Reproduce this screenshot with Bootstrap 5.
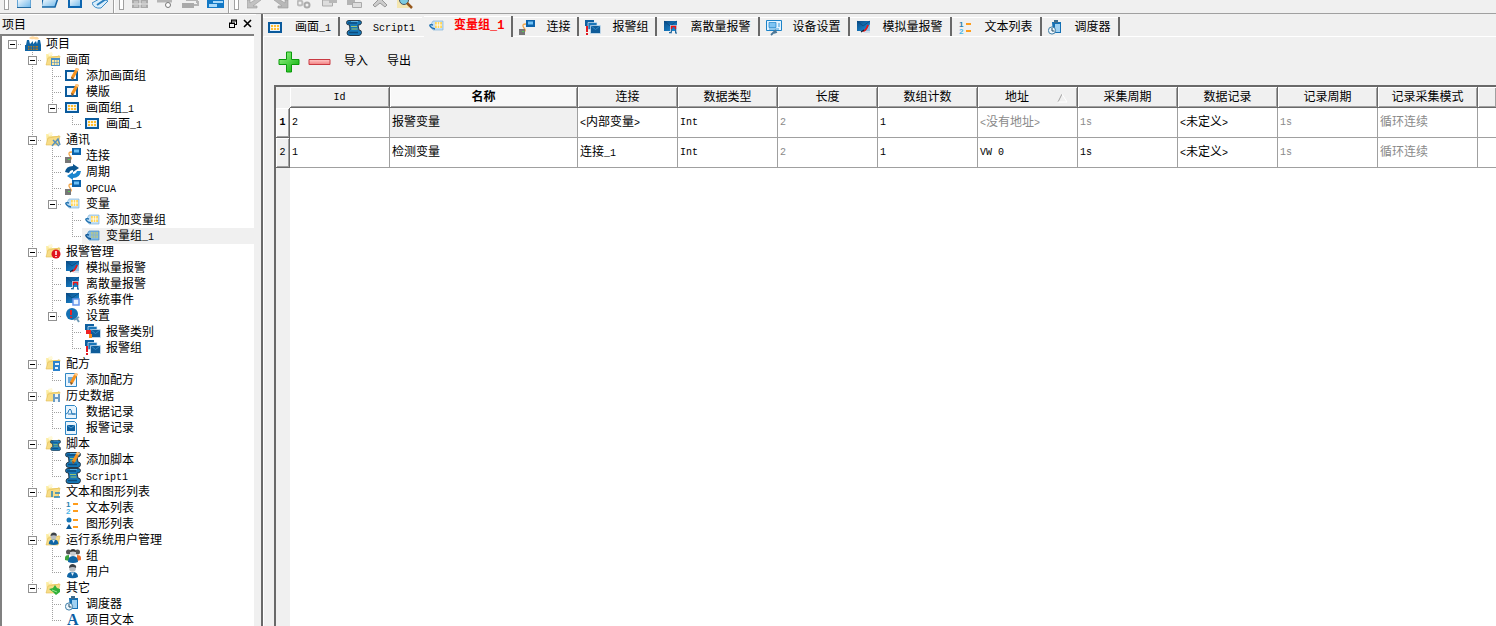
<!DOCTYPE html>
<html lang="zh-CN">
<head>
<meta charset="utf-8">
<meta name="viewport" content="width=device-width, initial-scale=1">
<title>项目 - 变量组_1</title>
<link href="https://cdn.jsdelivr.net/npm/bootstrap@5.3.0/dist/css/bootstrap.min.css" rel="stylesheet">
<style>
body{background:#f0f0f0;color:#000;font:12px/16px "Liberation Mono","Noto Sans CJK SC",monospace}
button{font:inherit;color:inherit}
svg{flex:none;display:block}
.lat{font-size:10px}
span.lat{line-height:1}
/* toolbar */
.toolbar{height:14px;border-bottom:1px solid #a0a0a0}
.tools{gap:8px}
.grip{width:5px;height:10px;border:solid #a0a0a0;border-width:0 1px 1px;background:#fff}
.split{width:2px;height:13px;background:#a0a0a0;border-right:1px solid #fff;margin:0 4px 0 -4px}
.tool{width:17px;height:10px}
/* project panel */
.side{width:256px;border-top:1px solid #fff}
.side-title{height:19px;padding:2px 3px 0 2px}
.tree-box{border:solid #808080;border-width:2px 0 0 2px;background:#fff;margin-right:2px}
.tree,.tree ul{list-style:none;margin:0;padding:0}
.tree{margin-left:-2px}
.tree ul{padding-left:20px}
.tree ul>li:not(:last-child){background:linear-gradient(#a0a0a0 50%,transparent 50%) 12px 0/1px 2px repeat-y}
.node{height:16px;padding-left:8px;background:repeating-linear-gradient(90deg,#a0a0a0 0 1px,transparent 1px 2px) 12px 8px/10px 1px no-repeat}
.tree ul>li:last-child>.node{background:repeating-linear-gradient(90deg,#a0a0a0 0 1px,transparent 1px 2px) 12px 8px/10px 1px no-repeat,repeating-linear-gradient(#a0a0a0 0 1px,transparent 1px 2px) 12px 0/1px 8px no-repeat}
.twist{width:9px;height:9px;padding:0;margin-right:5px;border:1px solid #919191;background:linear-gradient(#000,#000) center/5px 1px no-repeat #fff}
.node>.leaf{margin-left:14px}
.cap{padding-left:3px;gap:5px;height:16px}
.cap.on{background:#f0f0f0}
.cap>span{padding-top:2px}
/* editor */
.editor{border-left:2px solid #696969;margin-left:5px;box-shadow:inset 1px 0 #fff}
.tabs{height:23px;padding-top:3px;box-shadow:inset 0 -1px #fff}
.tabs button{border:0;border-right:2px solid #696969;background:#f0f0f0;padding:2px 7px 0 6px;gap:11px;height:19px;box-shadow:inset 0 1px #fff}
.tabs button.flat{border-color:#f0f0f0}
.tabs button.active{padding:0 7px 1px 5px;gap:9px;margin-top:-1px;height:21px;color:#f00;font-weight:700}
.tabs button:first-child{padding-left:5px;gap:11px}
.acts{padding:1px 15px 0;height:48px}
.acts button{border:0;background:none;padding:0}
.acts .word{margin-left:13px}
.acts .word+.word{margin-left:19px}
.grid-box{margin-left:11px;border:solid #696969;border-width:2px 0 0 2px;background:linear-gradient(90deg,#f0f0f0 14px,#fff 14px)}
.data-grid{table-layout:fixed;width:100%;border-collapse:separate;border-spacing:0}
.data-grid th,.data-grid td{overflow:hidden;white-space:nowrap;padding:1px 0 0}
.data-grid th{font-weight:400;text-align:center;background:#f0f0f0;border:solid #696969;border-width:0 1px 1px 0;box-shadow:inset 1px 1px #fff,inset -1px -1px #a0a0a0}
.data-grid thead th{height:21px}
.data-grid thead th:first-child{border-color:#f0f0f0;box-shadow:none;border-right:0}
.data-grid tr>:last-child{border-right:0}
.data-grid tbody tr{height:30px}
.data-grid td{border:solid #a0a0a0;border-width:0 1px 1px 0;padding-left:2px}
.data-grid th.cur{font-weight:700;background:#f8f8f8}
.data-grid td.cur{background:#f0f0f0}
.data-grid td.dim{color:#8a8a8a}
.w-row{width:14px}.w-col{width:100px}.w-name{width:188px}
</style>
</head>
<body class="vh-100 overflow-hidden d-flex flex-column">
<svg width="0" height="0" class="position-absolute" aria-hidden="true">
<defs>
<linearGradient id="gb" x2="1" y2="1"><stop offset="0" stop-color="#0a4c86"/><stop offset="1" stop-color="#1b8fdc"/></linearGradient>
<linearGradient id="gf" x2="1" y2="1"><stop offset="0" stop-color="#fff3b0"/><stop offset="1" stop-color="#e9bf4a"/></linearGradient>
<linearGradient id="gs" x2="1" y2="1"><stop offset="0" stop-color="#fff"/><stop offset="1" stop-color="#6cb6ea"/></linearGradient>
<linearGradient id="gg" x2="1" y2="1"><stop offset="0" stop-color="#9df58c"/><stop offset="1" stop-color="#05b005"/></linearGradient>
<linearGradient id="gr" x2="0" y2="1"><stop offset="0" stop-color="#ffc9c9"/><stop offset="1" stop-color="#f27f7f"/></linearGradient>
<symbol id="pen" viewBox="0 0 16 16"><path d="M12 1l3 1-5 9-2 2-1-3z" fill="#f7931e"/><path d="M12 1l3 1-1 2-3-1z" fill="#ffc987"/><path d="M7 10l3 1-2 2z" fill="#7a5430"/></symbol>
<symbol id="fold" viewBox="0 0 16 16"><path d="M1 2h5l1 2h6l1-1v9H2z" fill="url(#gf)"/><path d="M3 1l4-1 1 3-4 1z" fill="#fff9d8"/><path d="M1 13l2-7 12-2-2 9z" fill="#f7dc86" stroke="#e3bd55" stroke-width=".6"/></symbol>
<symbol id="factory" viewBox="0 0 16 16"><path d="M0 15V9h1l1-5h2l1 4 3-3v3l3-3 1 3 1-4h2l1 5v6H0z" fill="#0f64a4"/><path d="M3 10h10v4H3z" fill="#a87628"/><path d="M5 10v4M7.500 10v4M10 10v4M3 12h10" stroke="#0f64a4"/><path d="M4 2q3-3 6-1 3-1 4 2-3 1-5 0-3 1-5-1z" fill="#ffd9a0"/></symbol>
<symbol id="screen" viewBox="0 0 16 16"><path d="M0 2h14v11H0z" fill="#0a5a9c"/><path d="M2 4h10v7H2z" fill="#dff0ff"/><path d="M3 5h8v5H3z" fill="#ffbe32"/><path d="M5.500 5v5M8.500 5v5M3 7.500h8" stroke="#fff" stroke-width=".8"/></symbol>
<symbol id="frame" viewBox="0 0 16 16"><path d="M0 2h13v11H0z" fill="#0a5a9c"/><path d="M2 4h9v7H2z" fill="#f2f9ff"/><use href="#pen" x="-1" y="-1"/></symbol>
<symbol id="link" viewBox="0 0 16 16"><path d="M7 0h9v7H7z" fill="#0b62aa"/><path d="M9 1.500h5v3H9z" fill="#6ec1f7"/><path d="M7 4Q2 4 5 8q3 3-1 4" fill="none" stroke="#f3a64a" stroke-width="1.300"/><path d="M0 9h6v6H0z" fill="#777"/><path d="M3 11h2v1H3z" fill="#5c5"/></symbol>
<symbol id="cycle" viewBox="0 0 16 16"><path d="M0 8Q1 2 8 2V0l6 4-6 4V6Q5 6 4 9z" fill="#0a5590"/><path d="M16 7q-1 7-8 7v2l-6-4 6-4v2q3 0 4-3z" fill="#1a86cf"/></symbol>
<symbol id="tag" viewBox="0 0 16 16"><path d="M4 3h10v9H4L1 8z" fill="#c3e0f6" stroke="#84b5da" stroke-width=".7"/><path d="M6 4h7v6H6z" fill="#ffd65a"/><path d="M8.300 4v6M10.700 4v6M6 7h7" stroke="#fff" stroke-width=".8"/><path d="M4 7Q0 6 1 8q1 2 5 3" fill="none" stroke="#1d6fae" stroke-width="1.300"/></symbol>
<symbol id="tagon" viewBox="0 0 16 16"><path d="M4 3h10v9H4L1 8z" fill="#82b9e4" stroke="#3f8ac3" stroke-width=".7"/><path d="M6 4h7v6H6z" fill="#afc696"/><path d="M8.300 4v6M10.700 4v6M6 7h7" stroke="#7fb1dc" stroke-width=".8"/><path d="M4 7Q0 6 1 8q1 2 5 3" fill="none" stroke="#0d5290" stroke-width="1.300"/></symbol>
<symbol id="mail" viewBox="0 0 16 16"><path d="M1 1h13v10H1z" fill="url(#gb)"/><path d="M1 1l6 5 7-5" fill="none" stroke="#0b4479" stroke-width=".7"/></symbol>
<symbol id="analog" viewBox="0 0 16 16"><use href="#mail"/><path d="M6 13q3 0 4-3l4-6v9z" fill="#c2d6e8" opacity=".7"/><path d="M7 11q3 0 5-6" fill="none" stroke="#e11" stroke-width="1.700"/><path d="M5 12l3-2" stroke="#123" stroke-width="1.300"/></symbol>
<symbol id="discrete" viewBox="0 0 16 16"><use href="#mail"/><path d="M6 13h2V6h5v8" fill="none" stroke="#b5cbe0" stroke-width="2"/><path d="M8.500 9V6.500h4V9" fill="none" stroke="#e11" stroke-width="1.300"/><path d="M6 12.500h2.500V9m4 0v4H14" fill="none" stroke="#24689b"/></symbol>
<symbol id="sysev" viewBox="0 0 16 16"><use href="#mail"/><path d="M8 7h6v6H8z" fill="#eaf4ff" stroke="#6795ec" stroke-width="1.500"/></symbol>
<symbol id="alset" viewBox="0 0 16 16"><circle cx="7" cy="6" r="6" fill="#1571b3"/><path d="M6 2v5M6 8.500v1.500" stroke="#e22" stroke-width="2"/><path d="M9 12l5-3M12 11l2 3" stroke="#6b98b5" stroke-width="2"/></symbol>
<symbol id="cards" viewBox="0 0 16 16"><path d="M0 0h9v6H0z" fill="#0e5fa0"/><path d="M3 2.500h9v7H3z" fill="#1c76b8" stroke="#d5e8f7" stroke-width=".7"/><path d="M5.500 5.500h10v8h-10z" fill="#0f5c99" stroke="#d5e8f7" stroke-width=".7"/><path d="M6 6l4.500 3.500L15 6" stroke="#3a93d0" stroke-width=".8" fill="none"/></symbol>
<symbol id="algrp" viewBox="0 0 16 16"><use href="#cards"/><path d="M2 6v6M2 13v2" stroke="#e11a22" stroke-width="2"/></symbol>
<symbol id="alcls" viewBox="0 0 16 16"><use href="#cards"/><path d="M1 6h5v4H1z" fill="#e22"/><path d="M4 10h3v4H4z" fill="#f98c1b"/></symbol>
<symbol id="page" viewBox="0 0 16 16"><path d="M.5 1.500h9l2 2v11H.5z" fill="#e8f4fd" stroke="#2f86c4"/></symbol>
<symbol id="recipe" viewBox="0 0 16 16"><use href="#page"/><path d="M3 5h5v6H3z" fill="#6fa9d8"/><use href="#pen" x="-2"/></symbol>
<symbol id="curve" viewBox="0 0 16 16"><use href="#page"/><path d="M1 10q2 0 3-4 1-2 2 0l1 4h4M3 10h7" fill="none" stroke="#2377b5"/></symbol>
<symbol id="allog" viewBox="0 0 16 16"><use href="#page"/><path d="M2 5h8v6H2z" fill="#0c5f9f"/><path d="M2 5l4 3 4-3" fill="none" stroke="#6eb7e8" stroke-width=".7"/></symbol>
<symbol id="script" viewBox="0 0 16 16"><path d="M3 .5h10q2.500 0 2.500 2T13 5h-1l1 5q2.500 0 2.500 2.500T13 15.500H4q-3 0-3-2.500t3-3L3.500 5H3Q.5 5 .5 2.700T3 .5z" fill="#1678b8" stroke="#263949"/><path d="M2 3h9M3 12.500h9" stroke="#0c4b7d" stroke-width="1.300"/><path d="M5 6.500h6M5.500 9h6" stroke="#9ac46f"/><path d="M5 1.500h7" stroke="#58aee2"/></symbol>
<symbol id="scriptpen" viewBox="0 0 16 16"><use href="#script"/><use href="#pen" y="-1"/></symbol>
<symbol id="textlist" viewBox="0 0 16 16"><text x="1" y="7" font-family="Liberation Sans" font-weight="700" font-size="8" fill="#2d7fae">1</text><text x="1" y="14" font-family="Liberation Sans" font-weight="700" font-size="8" fill="#4cb5e8">2</text><path d="M8 4h5M8 11h5" stroke="#ff9d1c" stroke-width="2"/></symbol>
<symbol id="gfxlist" viewBox="0 0 16 16"><circle cx="4" cy="4" r="2.500" fill="#1676b8"/><path d="M4 8l3 5H1z" fill="#0b5a97"/><path d="M8 4h5M8 11h5" stroke="#ff9d1c" stroke-width="2"/></symbol>
<symbol id="user" viewBox="0 0 16 16"><path d="M2 13q0-5 5.500-5T13 13q-5 2.500-11 0z" fill="#0f65a5"/><path d="M6 8.500L7.500 12 9 8.500z" fill="#dcebf6"/><circle cx="7.500" cy="4.500" r="3.300" fill="#b9bdc2"/><path d="M4 4q0-4 4-4 4 1 3 4-3-2-7 0z" fill="#3c4146"/></symbol>
<symbol id="users" viewBox="0 0 16 16"><circle cx="3.500" cy="4" r="2.500" fill="#555"/><circle cx="12.500" cy="4" r="2.500" fill="#555"/><path d="M0 12q-1-5 4-5v6z" fill="#3da43d"/><path d="M16 12q1-5-4-5v6z" fill="#f0702b"/><path d="M3 14q0-6 5-6t5 6q-5 2-10 0z" fill="#0f65a5"/><circle cx="8" cy="5" r="3" fill="#c9ccd0"/><path d="M5 4q0-3 3-3t3 3q-3-1-6 0z" fill="#333"/></symbol>
<symbol id="sched" viewBox="0 0 16 16"><path d="M4 2h9v11H5z" fill="#1470b4"/><path d="M7 4h5v8H7z" fill="#9ed0f2"/><path d="M6 0h4v3H6z" fill="#3c6d8f"/><circle cx="4" cy="10.500" r="3.600" fill="#eef6fc" stroke="#3f7fa8"/><path d="M4 8v3h2.500" fill="none" stroke="#204a66"/></symbol>
<symbol id="atext" viewBox="0 0 16 16"><text x="2" y="13" font-family="Liberation Serif" font-weight="700" font-size="16" fill="#0b5fa5">A</text></symbol>
<symbol id="device" viewBox="0 0 16 16"><path d="M.5.500h15v10H.5z" fill="#e3f3ff" stroke="#1d83c8"/><path d="M3 2.500h7v5H3z" fill="#7fc4f3" stroke="#1d83c8" stroke-width=".7"/><path d="M12 4h2M12 6h2M3 9h10" stroke="#3b9bdb"/><path d="M5 15l5-5M8 13l3-1" stroke="#4c7898" stroke-width="1.800"/></symbol>
<symbol id="f-screen" viewBox="0 0 16 16"><use href="#fold"/><path d="M6 6h9v8H6z" fill="#4a8fc4"/><path d="M7 8h7v5H7z" fill="#ffe9a0"/><path d="M9.500 8v5M12 8v5M7 10.500h7" stroke="#4a8fc4" stroke-width=".6"/></symbol>
<symbol id="f-com" viewBox="0 0 16 16"><use href="#fold"/><path d="M7 14l6-7 2 6M8 8l6 6" fill="none" stroke="#5a93bd" stroke-width="1.500"/></symbol>
<symbol id="f-alarm" viewBox="0 0 16 16"><use href="#fold"/><circle cx="11" cy="10" r="4.500" fill="#e0141e"/><path d="M11 7v4M11 12v1" stroke="#fff" stroke-width="1.500"/></symbol>
<symbol id="f-recipe" viewBox="0 0 16 16"><use href="#fold"/><path d="M8 5h7v10H8z" fill="#2b82cc"/><path d="M10 7h4v2h-4zM10 11h3v2h-3z" fill="#e4f2fd"/></symbol>
<symbol id="f-hist" viewBox="0 0 16 16"><use href="#fold"/><path d="M8 6h7v8H8z" fill="#6b9cc4"/><path d="M10 6h3v3h-3zM10 11h3v3h-3z" fill="#edf5fb"/></symbol>
<symbol id="f-script" viewBox="0 0 16 16"><use href="#fold"/><use href="#script" x="5" y="4" width="11" height="11"/></symbol>
<symbol id="f-list" viewBox="0 0 16 16"><use href="#fold"/><path d="M7 7v6M10 9h5M9 13h6" stroke="#2584bd" stroke-width="1.500"/></symbol>
<symbol id="f-user" viewBox="0 0 16 16"><use href="#fold"/><use href="#user" x="2" y="0" width="14" height="15"/></symbol>
<symbol id="f-other" viewBox="0 0 16 16"><use href="#fold"/><path d="M4 9l4-1 2-3 2 3 3 1v3l-4 3-3-3z" fill="#31b03a"/><path d="M7 10l5 2" stroke="#9be58f"/></symbol>
</defs>
</svg>

<header class="toolbar d-flex align-items-start flex-shrink-0">
  <div class="d-flex tools">
    <span class="grip ms-1"></span>
    <svg class="tool" viewBox="0 0 17 10"><path d="M.5-2h13v9.500H.5z" fill="url(#gs)" stroke="#64a5d6"/><path d="M0 7.500h14" stroke="#22699f"/></svg>
    <svg class="tool" viewBox="0 0 17 10"><path d="M1-2h15l-3 9H-1z" fill="url(#gs)" stroke="#1565a5" stroke-width="1.500"/></svg>
    <svg class="tool" viewBox="0 0 17 10"><path d="M2-2h12v9H2z" fill="url(#gs)" stroke="#0e66b0" stroke-width="2"/></svg>
    <svg class="tool" viewBox="0 0 17 10"><path d="M0 3l9-5 7 3-7 7q-7 1-9-5z" fill="#d9edfb" stroke="#3c8bc6"/><path d="M5 5l9-6" stroke="#2a7fbe" stroke-width="2"/></svg>
    <span class="split"></span>
  </div>
  <div class="d-flex tools">
    <span class="grip"></span>
    <svg class="tool" viewBox="0 0 17 10"><path d="M0 0h16v8H0z" fill="#aaa"/><path d="M8 0v8M0 4h16" stroke="#f0f0f0"/><path d="M2 2h4M10 2h4M2 6h4M10 6h4" stroke="#ddd"/></svg>
    <svg class="tool" viewBox="0 0 17 10"><path d="M0 1h15" stroke="#b5b5b5" stroke-width="3"/><circle cx="11" cy="5" r="2.500" fill="#fff" stroke="#777"/></svg>
    <svg class="tool" viewBox="0 0 17 10"><path d="M0 3h12v5H0z" fill="#aaa"/><path d="M4 0h11v3M12 5h4V1" fill="none" stroke="#b5b5b5" stroke-width="2"/></svg>
    <svg class="tool" viewBox="0 0 17 10"><path d="M0 0h17v8H0z" fill="#1379c6"/><path d="M6 1h10v2H6zM2 4h8v3H2z" fill="#a9dafa"/></svg>
    <span class="split"></span>
  </div>
  <div class="d-flex tools">
    <span class="grip"></span>
    <svg class="tool" viewBox="0 0 17 10"><path d="M0 0h3v3l8-5 3 2-8 6h4v2H0z" fill="#c2c2c2" stroke="#999" stroke-width=".6"/></svg>
    <svg class="tool" viewBox="0 0 17 10"><path d="M16 0h-3v3L5-2 2 0l8 6H6v2h10z" fill="#b8b8b8" stroke="#999" stroke-width=".6"/></svg>
    <svg class="tool" viewBox="0 0 17 10"><circle cx="3" cy="3" r="2.500" fill="none" stroke="#bbb" stroke-width="2"/><circle cx="10" cy="5" r="2.500" fill="none" stroke="#aaa" stroke-width="2"/></svg>
    <svg class="tool" viewBox="0 0 17 10"><path d="M.5 0h10v6H.5z" fill="#ddd" stroke="#aaa"/><path d="M7 0h8v3H7z" fill="#b8b8b8"/></svg>
    <svg class="tool" viewBox="0 0 17 10"><path d="M0 0h8v5H0z" fill="#b4b4b4"/><path d="M5.500 2.500h9v5h-9z" fill="#ddd" stroke="#aaa"/></svg>
    <svg class="tool" viewBox="0 0 17 10"><path d="M1 5l7-7 7 7-2 2-5-4-5 4z" fill="#ccc" stroke="#999"/></svg>
    <svg class="tool" viewBox="0 0 17 10"><path d="M0 0h12v8H0z" fill="#f4e6b0"/><circle cx="7" cy="0" r="4.500" fill="#7ccbe0" stroke="#456"/><path d="M10 3l5 5" stroke="#96581c" stroke-width="2.500"/></svg>
  </div>
</header>

<main class="d-flex flex-grow-1 overflow-hidden">
  <aside class="side d-flex flex-column flex-shrink-0">
    <div class="side-title d-flex align-items-center justify-content-between flex-shrink-0">
      <span>项目</span>
      <span class="d-flex gap-1 pb-1">
        <button class="border-0 bg-transparent p-0" aria-label="浮动"><svg width="11" height="10" viewBox="0 0 11 10"><path d="M3 1h6M3 2h6M3.500 1v3M9 5.500H7M8.500 1v5M1 4h6M1 4.500h6M1.500 4v5M6.500 4v5M1 8.500h6" fill="none" stroke="#000"/></svg></button>
        <button class="border-0 bg-transparent p-0" aria-label="关闭"><svg width="10" height="10" viewBox="0 0 10 10"><path d="M1 1l7 7M8 1L1 8" stroke="#000" stroke-width="1.600"/></svg></button>
      </span>
    </div>
    <nav class="tree-box flex-grow-1 overflow-hidden">
      <ul class="tree" id="tree"></ul>
    </nav>
  </aside>

  <section class="editor flex-grow-1 d-flex flex-column overflow-hidden">
    <div class="tabs d-flex flex-shrink-0" role="tablist" id="tabs"></div>
    <div class="acts d-flex align-items-center flex-shrink-0">
      <button aria-label="添加"><svg width="22" height="22" viewBox="0 0 22 22"><path d="M8.500 1h5v7.500H21v5h-7.500V21h-5v-7.500H1v-5h7.500z" fill="url(#gg)" stroke="#0a9b0a"/></svg></button>
      <button class="ms-2" aria-label="删除"><svg width="23" height="22" viewBox="0 0 23 22"><path d="M1 8.500h21v5H1z" fill="url(#gr)" stroke="#c93a42"/></svg></button>
      <button class="word">导入</button>
      <button class="word">导出</button>
    </div>
    <div class="grid-box flex-grow-1 overflow-hidden">
      <table class="data-grid">
        <colgroup><col class="w-row"><col class="w-col"><col class="w-name"><col class="w-col"><col class="w-col"><col class="w-col"><col class="w-col"><col class="w-col"><col class="w-col"><col class="w-col"><col class="w-col"><col class="w-col"><col></colgroup>
        <thead>
          <tr><th></th><th class="lat">Id</th><th class="cur">名称</th><th>连接</th><th>数据类型</th><th>长度</th><th>数组计数</th>
          <th><span class="d-flex justify-content-end align-items-center pe-2 gap-4">地址<svg class="ms-1" width="12" height="10" viewBox="0 0 12 10"><path d="M1 9l4-8" stroke="#a0a0a0"/><path d="M5 1l5 8H1" fill="none" stroke="#fff"/></svg></span></th>
          <th>采集周期</th><th>数据记录</th><th>记录周期</th><th>记录采集模式</th><th></th></tr>
        </thead>
        <tbody>
          <tr><th class="cur lat">1</th><td class="lat">2</td><td class="cur">报警变量</td><td><span class="lat">&lt;</span>内部变量<span class="lat">&gt;</span></td><td class="lat">Int</td><td class="lat dim">2</td><td class="lat">1</td><td class="dim"><span class="lat">&lt;</span>没有地址<span class="lat">&gt;</span></td><td class="lat dim">1s</td><td><span class="lat">&lt;</span>未定义<span class="lat">&gt;</span></td><td class="lat dim">1s</td><td class="dim">循环连续</td><td></td></tr>
          <tr><th class="lat">2</th><td class="lat">1</td><td>检测变量</td><td>连接<span class="lat">_1</span></td><td class="lat">Int</td><td class="lat dim">2</td><td class="lat">1</td><td class="lat">VW 0</td><td class="lat">1s</td><td><span class="lat">&lt;</span>未定义<span class="lat">&gt;</span></td><td class="lat dim">1s</td><td class="dim">循环连续</td><td></td></tr>
        </tbody>
      </table>
    </div>
  </section>
</main>

<script src="https://cdn.jsdelivr.net/npm/bootstrap@5.3.0/dist/js/bootstrap.bundle.min.js"></script>
<script>
const icon = id => `<svg width="16" height="16"><use href="#${id}"/></svg>`;
// Latin runs are set smaller so that each letter is half a Chinese character wide
const label = s => s.replace(/[\x20-\x7e]+/g, m => `<span class="lat">${m}</span>`);
const project = ['factory', '项目', [
  ['f-screen', '画面', [['frame', '添加画面组'], ['frame', '模版'], ['screen', '画面组_1', [['screen', '画面_1']]]]],
  ['f-com', '通讯', [['link', '连接'], ['cycle', '周期'], ['link', 'OPCUA'],
    ['tag', '变量', [['tag', '添加变量组'], ['tagon', '变量组_1', null, true]]]]],
  ['f-alarm', '报警管理', [['analog', '模拟量报警'], ['discrete', '离散量报警'], ['sysev', '系统事件'],
    ['alset', '设置', [['alcls', '报警类别'], ['algrp', '报警组']]]]],
  ['f-recipe', '配方', [['recipe', '添加配方']]],
  ['f-hist', '历史数据', [['curve', '数据记录'], ['allog', '报警记录']]],
  ['f-script', '脚本', [['scriptpen', '添加脚本'], ['script', 'Script1']]],
  ['f-list', '文本和图形列表', [['textlist', '文本列表'], ['gfxlist', '图形列表']]],
  ['f-user', '运行系统用户管理', [['users', '组'], ['user', '用户']]],
  ['f-other', '其它', [['sched', '调度器'], ['atext', '项目文本']]]
]];
const node = ([ic, text, kids, on]) => `<li><div class="node d-flex align-items-center">${
  kids ? '<button class="twist flex-shrink-0" aria-label="折叠"></button>' : ''
}<span class="cap d-flex align-items-center flex-grow-1${kids ? '' : ' leaf'}${on ? ' on' : ''}">${icon(ic)}<span>${label(text)}</span></span></div>${
  kids ? `<ul>${kids.map(node).join('')}</ul>` : ''}</li>`;
document.getElementById('tree').innerHTML = node(project);

const tabs = [['screen', '画面_1'], ['script', 'Script1', 'flat'], ['tag', '变量组_1', 'active'], ['link', '连接'], ['algrp', '报警组'],
  ['discrete', '离散量报警'], ['device', '设备设置'], ['analog', '模拟量报警'], ['textlist', '文本列表'], ['sched', '调度器']];
document.getElementById('tabs').innerHTML = tabs.map(([ic, text, cls = '']) =>
  `<button role="tab" class="d-flex align-items-center ${cls}">${icon(ic)}<span>${cls === 'active' ? text : label(text)}</span></button>`).join('');
</script>
</body>
</html>
